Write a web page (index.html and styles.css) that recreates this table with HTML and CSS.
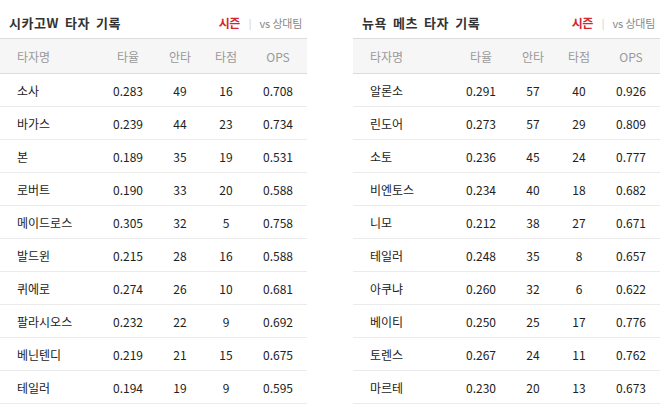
FILE: index.html
```html
<!DOCTYPE html>
<html lang="ko">
<head>
<meta charset="utf-8">
<link rel="stylesheet" href="styles.css">
</head>
<body>
<div class="wrap">
  <section class="panel">
    <div class="title-row">
      <h2 class="title">시카고W 타자 기록</h2>
      <div class="tabs"><span class="tab-on">시즌</span><span class="sep">|</span><span class="tab-off">vs 상대팀</span></div>
    </div>
    <div class="table">
      <div class="row head"><span class="name">타자명</span><span>타율</span><span>안타</span><span>타점</span><span class="ops">OPS</span></div>
      <div class="row"><span class="name">소사</span><span>0.283</span><span>49</span><span>16</span><span class="ops">0.708</span></div>
      <div class="row"><span class="name">바가스</span><span>0.239</span><span>44</span><span>23</span><span class="ops">0.734</span></div>
      <div class="row"><span class="name">본</span><span>0.189</span><span>35</span><span>19</span><span class="ops">0.531</span></div>
      <div class="row"><span class="name">로버트</span><span>0.190</span><span>33</span><span>20</span><span class="ops">0.588</span></div>
      <div class="row"><span class="name">메이드로스</span><span>0.305</span><span>32</span><span>5</span><span class="ops">0.758</span></div>
      <div class="row"><span class="name">발드윈</span><span>0.215</span><span>28</span><span>16</span><span class="ops">0.588</span></div>
      <div class="row"><span class="name">퀴에로</span><span>0.274</span><span>26</span><span>10</span><span class="ops">0.681</span></div>
      <div class="row"><span class="name">팔라시오스</span><span>0.232</span><span>22</span><span>9</span><span class="ops">0.692</span></div>
      <div class="row"><span class="name">베닌텐디</span><span>0.219</span><span>21</span><span>15</span><span class="ops">0.675</span></div>
      <div class="row"><span class="name">테일러</span><span>0.194</span><span>19</span><span>9</span><span class="ops">0.595</span></div>
    </div>
  </section>
  <section class="panel">
    <div class="title-row">
      <h2 class="title">뉴욕 메츠 타자 기록</h2>
      <div class="tabs"><span class="tab-on">시즌</span><span class="sep">|</span><span class="tab-off">vs 상대팀</span></div>
    </div>
    <div class="table">
      <div class="row head"><span class="name">타자명</span><span>타율</span><span>안타</span><span>타점</span><span class="ops">OPS</span></div>
      <div class="row"><span class="name">알론소</span><span>0.291</span><span>57</span><span>40</span><span class="ops">0.926</span></div>
      <div class="row"><span class="name">린도어</span><span>0.273</span><span>57</span><span>29</span><span class="ops">0.809</span></div>
      <div class="row"><span class="name">소토</span><span>0.236</span><span>45</span><span>24</span><span class="ops">0.777</span></div>
      <div class="row"><span class="name">비엔토스</span><span>0.234</span><span>40</span><span>18</span><span class="ops">0.682</span></div>
      <div class="row"><span class="name">니모</span><span>0.212</span><span>38</span><span>27</span><span class="ops">0.671</span></div>
      <div class="row"><span class="name">테일러</span><span>0.248</span><span>35</span><span>8</span><span class="ops">0.657</span></div>
      <div class="row"><span class="name">아쿠냐</span><span>0.260</span><span>32</span><span>6</span><span class="ops">0.622</span></div>
      <div class="row"><span class="name">베이티</span><span>0.250</span><span>25</span><span>17</span><span class="ops">0.776</span></div>
      <div class="row"><span class="name">토렌스</span><span>0.267</span><span>24</span><span>11</span><span class="ops">0.762</span></div>
      <div class="row"><span class="name">마르테</span><span>0.230</span><span>20</span><span>13</span><span class="ops">0.673</span></div>
    </div>
  </section>
</div>
</body>
</html>
```

FILE: styles.css
```css
html, body {
  margin: 0;
  padding: 0;
  background: #fff;
}
body {
  font-family: "Noto Sans CJK KR", "Noto Sans", sans-serif;
  color: #333;
  overflow: hidden;
}
.wrap {
  display: flex;
  gap: 46px;
}
.panel {
  width: 307px;
  flex: none;
}
.title-row {
  height: 38px;
  box-sizing: border-box;
  padding: 8px 5px 0 9px;
  display: flex;
  align-items: center;
  justify-content: space-between;
}
.title {
  margin: 0;
  font-size: 13px;
  font-weight: 700;
  color: #333;
  letter-spacing: 0.5px;
  word-spacing: 2px;
  line-height: 30px;
}
.tabs {
  display: flex;
  align-items: center;
  font-size: 11px;
  line-height: 30px;
}
.tab-on {
  color: #d3262e;
  font-weight: 700;
  font-size: 12px;
  letter-spacing: -0.5px;
}
.sep {
  color: #ccc;
  margin: 0 8px 0 9px;
  font-size: 10px;
}
.tab-off {
  color: #888;
  letter-spacing: -0.3px;
}
.row {
  display: grid;
  grid-template-columns: 102px 52px 52px 40px 1fr;
  height: 33px;
  box-sizing: border-box;
  border-bottom: 1px solid #ebebeb;
  align-items: center;
  font-size: 12px;
  color: #222;
}
.row > span {
  text-align: center;
}
.row > .name {
  text-align: left;
  padding-left: 17px;
}
.row > .ops {
  padding-left: 3px;
}
.row.head {
  height: 36px;
  background: #f6f6f6;
  border-top: 1px solid #dcdcdc;
  border-bottom: 1px solid #dcdcdc;
  color: #999;
}
```
